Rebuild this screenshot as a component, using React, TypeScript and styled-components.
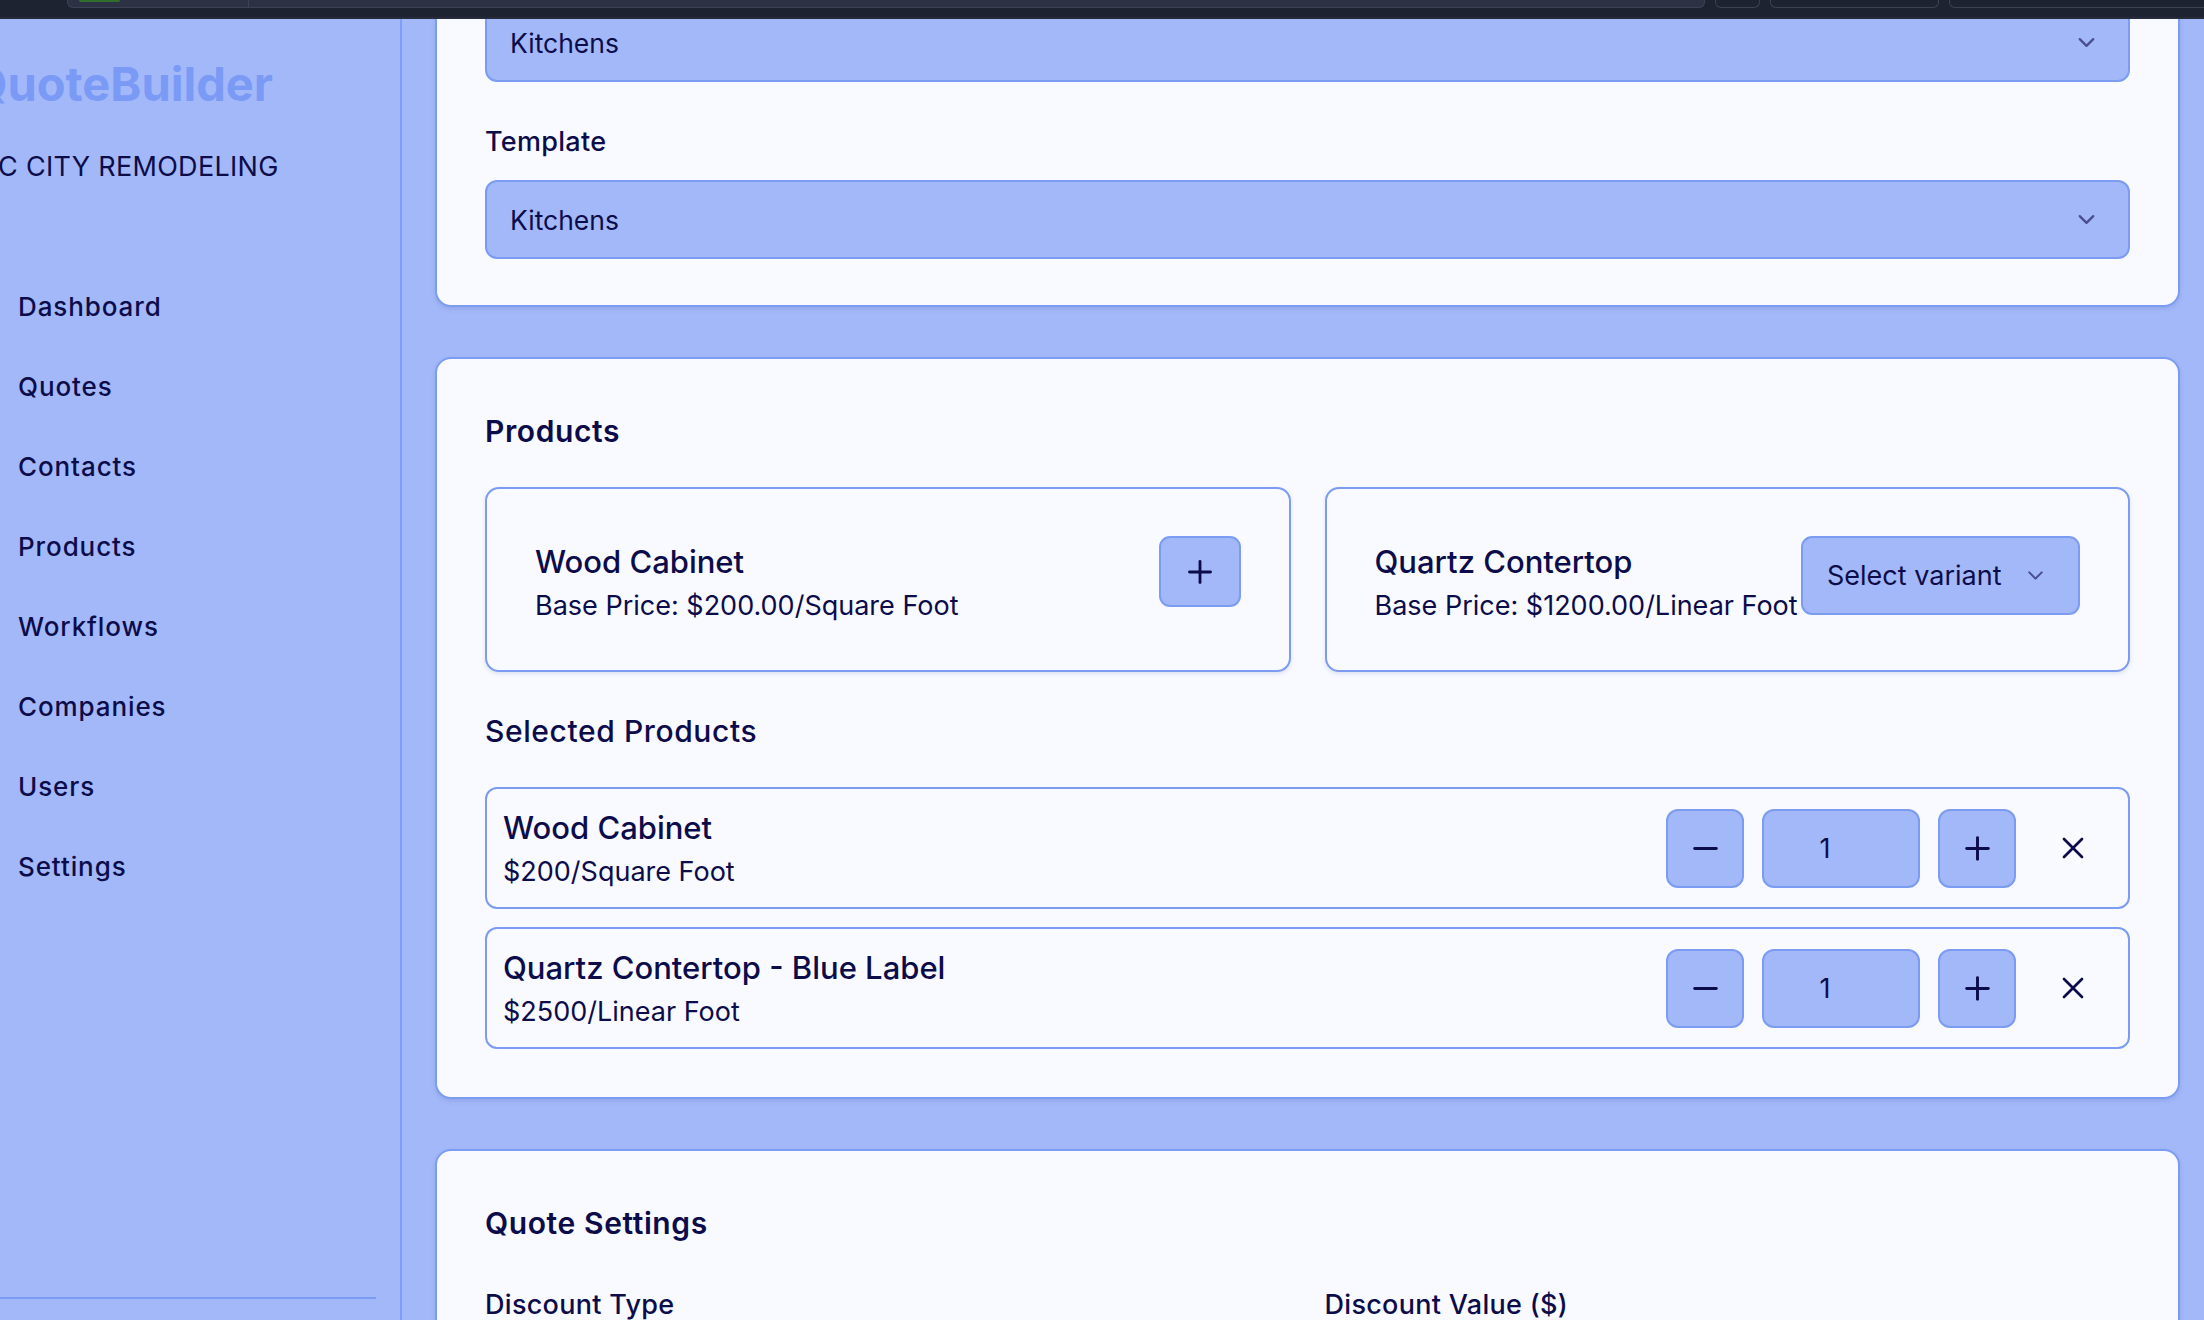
import React from "react";
import styled, { createGlobalStyle } from "styled-components";
import { ChevronDown, Plus, Minus, X } from "lucide-react";

const NAVY = "#0d0c4b";
const PERI = "#a3b8f8";
const LINE = "#7b9cf2";
const CARD = "#f8faff";

const GlobalStyle = createGlobalStyle`
  html, body { margin: 0; padding: 0; }
  body {
    background: ${PERI};
    font-family: Inter, "Noto Sans", "Liberation Sans", sans-serif;
    color: ${NAVY};
    overflow: hidden;
  }
  * { box-sizing: border-box; }
`;

const Page = styled.div`
  width: 2204px;
  height: 1320px;
  display: flex;
  flex-direction: column;
  overflow: hidden;
`;

const ChromeBar = styled.div`
  height: 19px;
  flex: none;
  background: #1e2331;
  border-bottom: 2px solid #262c3b;
  display: flex;
  align-items: flex-start;
  padding-left: 67px;
  gap: 10px;
  overflow: hidden;
`;

const ChromeTab = styled.div<{ $w: number; $filled?: boolean }>`
  flex: none;
  width: ${(p) => p.$w}px;
  height: 8px;
  border: 1px solid #3b4254;
  border-top: none;
  border-radius: 0 0 6px 6px;
  background: ${(p) => (p.$filled ? "#2c3244" : "transparent")};
  display: flex;
  align-items: flex-start;
`;

const TabSegment = styled.div<{ $w: number }>`
  width: ${(p) => p.$w}px;
  height: 100%;
  border-right: 1px solid #3b4254;
  padding-left: 11px;
`;

const GreenMark = styled.div`
  width: 41px;
  height: 2px;
  border-radius: 0 0 3px 3px;
  background: #2f6e2c;
`;

const Body = styled.div`
  flex: 1;
  display: flex;
  min-height: 0;
`;

const Sidebar = styled.aside`
  width: 402px;
  flex: none;
  background: ${PERI};
  border-right: 2px solid #7f9ef5;
  display: flex;
  flex-direction: column;
  overflow: hidden;
  padding-top: 37px;
`;

const Brand = styled.div`
  font-size: 47px;
  font-weight: 700;
  line-height: 56px;
  color: #7a9af6;
  margin-left: -29px;
  white-space: nowrap;
`;

const Company = styled.div`
  font-size: 27px;
  line-height: 40px;
  font-weight: 400;
  margin-top: 35px;
  margin-left: -2px;
  white-space: nowrap;
  letter-spacing: 0.3px;
`;

const Nav = styled.nav`
  flex: 1;
  display: flex;
  flex-direction: column;
  margin-top: 79px;
  padding-left: 18px;
`;

const NavItem = styled.a`
  height: 80.1px;
  display: flex;
  align-items: center;
  font-size: 26px;
  font-weight: 500;
  color: ${NAVY};
  text-decoration: none;
  letter-spacing: 0.9px;
`;

const Divider = styled.div`
  width: 376px;
  height: 2px;
  background: ${LINE};
  margin-bottom: 21px;
`;

const Main = styled.main`
  flex: 1;
  min-width: 0;
  overflow: hidden;
  padding: 0 24px 0 33px;
  display: flex;
  flex-direction: column;
  gap: 50px;
`;

const Card = styled.section<{ $pt?: number; $pb?: number; $mt?: number }>`
  flex: none;
  background: ${CARD};
  border: 2px solid ${LINE};
  border-radius: 16px;
  box-shadow: 0 2px 4px rgba(70, 90, 170, 0.18);
  padding: ${(p) => p.$pt ?? 48}px 48px ${(p) => p.$pb ?? 48}px;
  margin-top: ${(p) => p.$mt ?? 0}px;
`;

const SelectBox = styled.div`
  height: 79px;
  background: ${PERI};
  border: 2px solid ${LINE};
  border-radius: 12px;
  display: flex;
  align-items: center;
  justify-content: space-between;
  padding: 0 28px 0 23px;
  font-size: 26.5px;
  color: ${NAVY};
  svg { color: #4a4c90; }
`;

const Field = styled.div`
  display: flex;
  flex-direction: column;
`;

const Label = styled.label`
  font-size: 27px;
  font-weight: 500;
  line-height: 39px;
  letter-spacing: 0.3px;
  margin-top: 40px;
  margin-bottom: 19px;
`;

const SectionTitle = styled.h2<{ $weight?: number; $mt?: number }>`
  margin: ${(p) => p.$mt ?? 0}px 0 0;
  font-size: 30px;
  line-height: 44px;
  letter-spacing: 0.6px;
  font-weight: ${(p) => p.$weight ?? 600};
`;

const ProductGrid = styled.div`
  display: grid;
  grid-template-columns: 1fr 1fr;
  gap: 34px;
  margin-top: 34px;
`;

const ProductCard = styled.div`
  border: 2px solid ${LINE};
  border-radius: 14px;
  background: ${CARD};
  box-shadow: 0 2px 4px rgba(70, 90, 170, 0.15);
  padding: 48px 48px 46px;
  display: flex;
  align-items: flex-start;
  justify-content: space-between;
`;

const ProductInfo = styled.div`
  flex: 1;
  min-width: 0;
  white-space: nowrap;
`;

const ProductName = styled.div`
  font-size: 31px;
  line-height: 50px;
  font-weight: 500;
`;

const ProductPrice = styled.div`
  font-size: 27px;
  line-height: 37px;
  font-weight: 400;
`;

const AddButton = styled.button`
  flex: none;
  width: 82px;
  height: 71px;
  margin-top: -1px;
  border: 2px solid ${LINE};
  border-radius: 11px;
  background: ${PERI};
  color: ${NAVY};
  display: flex;
  align-items: center;
  justify-content: center;
  padding: 0;
`;

const VariantSelect = styled.button`
  flex: none;
  width: 279px;
  height: 79px;
  margin-top: -1px;
  border: 2px solid ${LINE};
  border-radius: 11px;
  background: ${PERI};
  color: ${NAVY};
  font-family: inherit;
  font-size: 27px;
  display: flex;
  align-items: center;
  justify-content: space-between;
  padding: 0 30px 0 24px;
  svg { color: #4a4c90; }
`;

const SelectedList = styled.div`
  display: flex;
  flex-direction: column;
  gap: 18px;
  margin-top: 34px;
`;

const SelectedRow = styled.div`
  height: 122px;
  border: 2px solid ${LINE};
  border-radius: 12px;
  background: ${CARD};
  display: flex;
  align-items: center;
  justify-content: space-between;
  padding: 0 16px;
`;

const RowName = styled.div`
  font-size: 31px;
  line-height: 48px;
  font-weight: 500;
`;

const RowPrice = styled.div`
  font-size: 27px;
  line-height: 40px;
`;

const Controls = styled.div`
  display: flex;
  align-items: center;
  gap: 18px;
`;

const StepButton = styled.button`
  width: 78px;
  height: 79px;
  border: 2px solid ${LINE};
  border-radius: 12px;
  background: ${PERI};
  color: ${NAVY};
  display: flex;
  align-items: center;
  justify-content: center;
  padding: 0;
`;

const QtyBox = styled.div`
  width: 158px;
  height: 79px;
  border: 2px solid ${LINE};
  border-radius: 12px;
  background: ${PERI};
  display: flex;
  align-items: center;
  justify-content: center;
  padding-right: 32px;
  font-size: 27px;
`;

const RemoveButton = styled.button`
  width: 78px;
  height: 79px;
  border: none;
  background: transparent;
  color: ${NAVY};
  display: flex;
  align-items: center;
  justify-content: center;
  padding: 0;
`;

const SettingsGrid = styled.div`
  display: grid;
  grid-template-columns: 1fr 1fr;
  column-gap: 34px;
`;

const EmptyInput = styled.div`
  height: 79px;
  background: ${PERI};
  border: 2px solid ${LINE};
  border-radius: 12px;
`;

const navItems = ["Dashboard", "Quotes", "Contacts", "Products", "Workflows", "Companies", "Users", "Settings"];

const selected = [
  { name: "Wood Cabinet", price: "$200/Square Foot" },
  { name: "Quartz Contertop - Blue Label", price: "$2500/Linear Foot" },
];

export default function App() {
  return (
    <>
      <GlobalStyle />
      <Page>
        <ChromeBar>
          <ChromeTab $w={1638} $filled>
            <TabSegment $w={181}>
              <GreenMark />
            </TabSegment>
          </ChromeTab>
          <ChromeTab $w={45} />
          <ChromeTab $w={169} />
          <ChromeTab $w={300} />
        </ChromeBar>
        <Body>
          <Sidebar>
            <Brand>QuoteBuilder</Brand>
            <Company>C CITY REMODELING</Company>
            <Nav>
              {navItems.map((n) => (
                <NavItem key={n}>{n}</NavItem>
              ))}
            </Nav>
            <Divider />
          </Sidebar>
          <Main>
            <Card $mt={-66} $pb={46}>
              <SelectBox>
                <span>Kitchens</span>
                <ChevronDown size={27} strokeWidth={2} />
              </SelectBox>
              <Field>
                <Label>Template</Label>
                <SelectBox>
                  <span>Kitchens</span>
                  <ChevronDown size={27} strokeWidth={2} />
                </SelectBox>
              </Field>
            </Card>

            <Card $pt={50}>
              <SectionTitle>Products</SectionTitle>
              <ProductGrid>
                <ProductCard>
                  <ProductInfo>
                    <ProductName>Wood Cabinet</ProductName>
                    <ProductPrice>Base Price: $200.00/Square Foot</ProductPrice>
                  </ProductInfo>
                  <AddButton>
                    <Plus size={36} strokeWidth={1.9} />
                  </AddButton>
                </ProductCard>
                <ProductCard>
                  <ProductInfo>
                    <ProductName>Quartz Contertop</ProductName>
                    <ProductPrice>Base Price: $1200.00/Linear Foot</ProductPrice>
                  </ProductInfo>
                  <VariantSelect>
                    <span>Select variant</span>
                    <ChevronDown size={25} strokeWidth={2} />
                  </VariantSelect>
                </ProductCard>
              </ProductGrid>

              <SectionTitle $weight={500} $mt={37}>Selected Products</SectionTitle>
              <SelectedList>
                {selected.map((s) => (
                  <SelectedRow key={s.name}>
                    <div>
                      <RowName>{s.name}</RowName>
                      <RowPrice>{s.price}</RowPrice>
                    </div>
                    <Controls>
                      <StepButton>
                        <Minus size={37} strokeWidth={1.9} />
                      </StepButton>
                      <QtyBox>1</QtyBox>
                      <StepButton>
                        <Plus size={37} strokeWidth={1.9} />
                      </StepButton>
                      <RemoveButton>
                        <X size={36} strokeWidth={1.8} />
                      </RemoveButton>
                    </Controls>
                  </SelectedRow>
                ))}
              </SelectedList>
            </Card>

            <Card $pt={50}>
              <SectionTitle>Quote Settings</SectionTitle>
              <SettingsGrid>
                <Field>
                  <Label>Discount Type</Label>
                  <EmptyInput />
                </Field>
                <Field>
                  <Label>Discount Value ($)</Label>
                  <EmptyInput />
                </Field>
              </SettingsGrid>
            </Card>
          </Main>
        </Body>
      </Page>
    </>
  );
}
